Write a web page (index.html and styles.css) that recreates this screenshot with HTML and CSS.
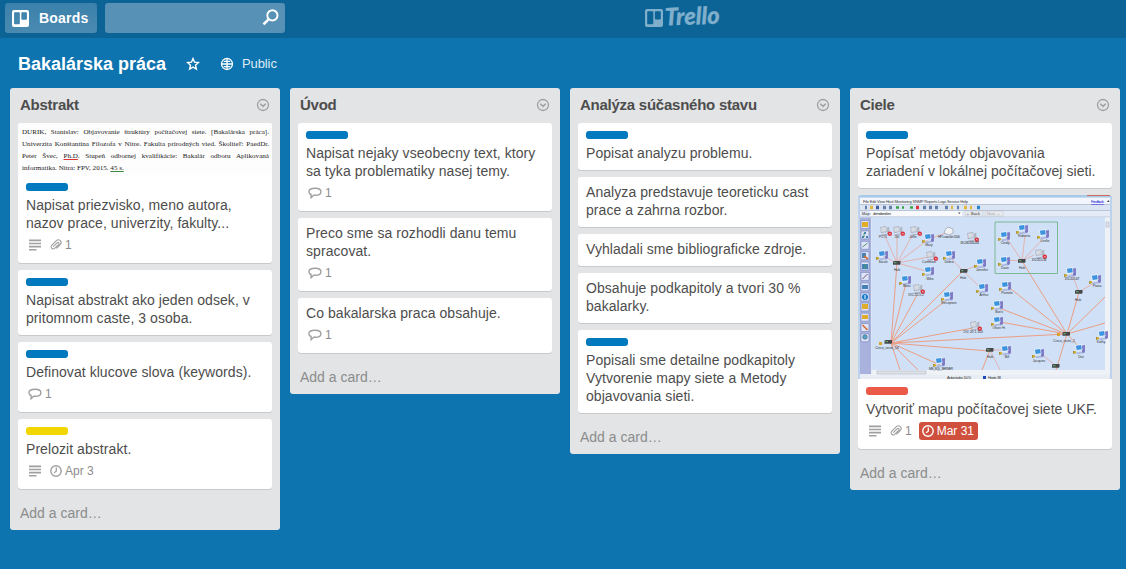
FILE: index.html
```html
<!DOCTYPE html>
<html lang="sk">
<head>
<meta charset="utf-8">
<title>Bakalárska práca | Trello</title>
<link rel="stylesheet" href="styles.css">
</head>
<body>
<svg class="defs" aria-hidden="true">
  <symbol id="i-menu" viewBox="0 0 14 14"><circle cx="7" cy="7" r="5.500" fill="none" stroke="currentColor" stroke-width="1.300"/><path d="M4.300 5.800 7 8.400l2.700-2.600" fill="none" stroke="currentColor" stroke-width="1.500"/></symbol>
  <symbol id="i-desc" viewBox="0 0 12 12"><path d="M0 1.400h12M0 4.500h12M0 7.600h12M0 10.700h7.500" stroke="currentColor" stroke-width="1.600"/></symbol>
  <symbol id="i-clip" viewBox="0 0 12 12"><path d="M3.200 7.600 7 3.800c1.300-1.200 2.800.2 1.600 1.500L4.900 9.100c-2.200 2.200-5.200-.7-3-2.900l4.200-4.300c3-2.800 6.700.7 4.100 3.600L6.400 9.400" fill="none" stroke="currentColor" stroke-width="1.100"/></symbol>
  <symbol id="i-talk" viewBox="0 0 14 12"><path d="M7.200 1.200c3.200 0 5.700 1.300 5.700 3.500S10.400 8.300 7.200 8.300c-.6 0-1.100 0-1.600-.1L3.100 10.700V7.500C1.700 6.900.9 5.800.9 4.700c0-2.200 3-3.500 6.300-3.500z" fill="none" stroke="currentColor" stroke-width="1.400"/></symbol>
  <symbol id="i-clock" viewBox="0 0 12 12"><circle cx="6" cy="6" r="5.200" fill="none" stroke="currentColor" stroke-width="1.400"/><path d="M6.300 2.600v3.600L4 7.800" fill="none" stroke="currentColor" stroke-width="1.300"/></symbol>
  <symbol id="i-trello" viewBox="0 0 18 18"><path fill="currentColor" fill-rule="evenodd" d="M2 0h14q2 0 2 2v14q0 2-2 2H2q-2 0-2-2V2q0-2 2-2zM3 2.300q-.8 0-.8.8v11.300q0 .8.8.8h4.500q.8 0 .8-.8V3.100q0-.8-.8-.8zM10.700 2.300q-.8 0-.8.8v6.500q0 .8.8.8H15q.8 0 .8-.8V3.100q0-.8-.8-.8z"/></symbol>
  <symbol id="pc" viewBox="0 0 12 10"><path d="M8 1.500 11 .8v6.700L8.500 8.600z" fill="#7d78c4"/><path d="M2 .8 8 0l.8 5.500-6 1z" fill="#e6effb"/><path d="M2.700 1.500 7.500.9l.6 3.900-4.700.7z" fill="#3c93de"/><path d="m2.500 8 5.500-1 1.500 1.200L4 9.300z" fill="#aab5dc"/><path d="M0 6.500h1.300v2.500H0z" fill="#8a7a42"/><circle cx="1.600" cy="7.600" r="1.200" fill="#cdaa20"/></symbol>
  <symbol id="off" viewBox="0 0 12 10"><path d="M1 .8 6.500 0l.8 5.500-5.500 1zM7.500 1l2-.5v6L7.500 8z" fill="#b0b4be"/><path d="M1.800 1.500 6 .9l.6 3.900-4.200.7z" fill="#d6dbe4"/><path d="m1.500 8 5-1 1.500 1-5 1.300z" fill="#abb0c0"/><circle cx="10" cy="7" r="2" fill="#da2431"/><path d="m9.200 6.200 1.600 1.600m0-1.600L9.200 7.800" stroke="#fff" stroke-width=".5"/></symbol>
  <symbol id="hub" viewBox="0 0 8 4"><path d="M0 .8 1 0h6.500v2.800L7 3.800H0z" fill="#44484a"/><path d="M1 1.700h2.500" stroke="#69b56c"/></symbol>
</svg>

<header class="topbar">
  <div class="boards-btn"><svg class="boards-icon"><use href="#i-trello"/></svg><span>Boards</span></div>
  <div class="search"><svg class="search-icon" viewBox="0 0 16 16"><circle cx="9.800" cy="6" r="4.800" fill="none" stroke="#fff" stroke-width="1.800"/><path d="m6.200 9.800-4.800 4.700" stroke="#fff" stroke-width="2.500"/></svg></div>
  <svg class="logo" viewBox="0 0 80 36"><use href="#i-trello" x="1" y="9" width="18" height="18"/><text x="21" y="25.500" textLength="55" lengthAdjust="spacingAndGlyphs" transform="rotate(-2 21 25)">Trello</text></svg>
</header>

<div class="board-head">
  <h1>Bakalárska práca</h1>
  <svg class="star" viewBox="0 0 14 14"><path d="m7 1.600 1.500 3.600 3.900.4-2.900 2.600.9 3.900L7 10.100l-3.400 2 .9-3.900-2.900-2.600 3.900-.4z" fill="none" stroke="currentColor" stroke-width="1.400"/></svg>
  <svg class="globe" viewBox="0 0 14 14"><circle cx="7" cy="7" r="5.500" fill="none" stroke="currentColor" stroke-width="1.300"/><path d="M7 1.500v11M1.500 7h11M3.800 4.400h6.400M3.800 9.600h6.400" fill="none" stroke="currentColor" stroke-width="1.300"/></svg>
  <span class="public">Public</span>
</div>

<main class="board">
  <section class="list">
    <div class="list-head"><h2>Abstrakt</h2><svg class="menu"><use href="#i-menu"/></svg></div>
    <article class="card">
      <div class="cover cite">
        <p>DURIK, Stanislav: Objavovanie štruktúry počítačovej siete. [Bakalárska práca].</p>
        <p>Univerzita Konštantína Filozofa v Nitre. Fakulta prírodných vied. Školiteľ: PaedDr.</p>
        <p>Peter Švec, <u class="err">Ph.D</u>. Stupeň odbornej kvalifikácie: Bakalár odboru Aplikovaná</p>
        <p class="last">informatika. Nitra: FPV, 2015. <u>45 s.</u></p>
      </div>
      <div class="label blue"></div>
      <p class="text">Napisat priezvisko, meno autora, nazov prace, univerzity, fakulty...</p>
      <div class="badges"><svg class="ic desc"><use href="#i-desc"/></svg><span class="badge"><svg class="ic"><use href="#i-clip"/></svg>1</span></div>
    </article>
    <article class="card">
      <div class="label blue"></div>
      <p class="text">Napisat abstrakt ako jeden odsek, v pritomnom caste, 3 osoba.</p>
    </article>
    <article class="card">
      <div class="label blue"></div>
      <p class="text">Definovat klucove slova (keywords).</p>
      <div class="badges"><span class="badge talk"><svg class="ic"><use href="#i-talk"/></svg>1</span></div>
    </article>
    <article class="card">
      <div class="label yellow"></div>
      <p class="text">Prelozit abstrakt.</p>
      <div class="badges"><svg class="ic desc"><use href="#i-desc"/></svg><span class="badge date"><svg class="ic"><use href="#i-clock"/></svg>Apr 3</span></div>
    </article>
    <div class="add">Add a card…</div>
  </section>

  <section class="list">
    <div class="list-head"><h2>Úvod</h2><svg class="menu"><use href="#i-menu"/></svg></div>
    <article class="card">
      <div class="label blue"></div>
      <p class="text">Napisat nejaky vseobecny text, ktory sa tyka problematiky nasej temy.</p>
      <div class="badges"><span class="badge talk"><svg class="ic"><use href="#i-talk"/></svg>1</span></div>
    </article>
    <article class="card">
      <p class="text">Preco sme sa rozhodli danu temu spracovat.</p>
      <div class="badges"><span class="badge talk"><svg class="ic"><use href="#i-talk"/></svg>1</span></div>
    </article>
    <article class="card">
      <p class="text">Co bakalarska praca obsahuje.</p>
      <div class="badges"><span class="badge talk"><svg class="ic"><use href="#i-talk"/></svg>1</span></div>
    </article>
    <div class="add">Add a card…</div>
  </section>

  <section class="list">
    <div class="list-head"><h2>Analýza súčasného stavu</h2><svg class="menu"><use href="#i-menu"/></svg></div>
    <article class="card">
      <div class="label blue"></div>
      <p class="text">Popisat analyzu problemu.</p>
    </article>
    <article class="card"><p class="text">Analyza predstavuje teoreticku cast prace a zahrna rozbor.</p></article>
    <article class="card"><p class="text">Vyhladali sme bibliograficke zdroje.</p></article>
    <article class="card"><p class="text">Obsahuje podkapitoly a tvori 30 % bakalarky.</p></article>
    <article class="card">
      <div class="label blue"></div>
      <p class="text">Popisali sme detailne podkapitoly Vytvorenie mapy siete a Metody objavovania sieti.</p>
    </article>
    <div class="add">Add a card…</div>
  </section>

  <section class="list">
    <div class="list-head"><h2>Ciele</h2><svg class="menu"><use href="#i-menu"/></svg></div>
    <article class="card">
      <div class="label blue"></div>
      <p class="text">Popísať metódy objavovania zariadení v lokálnej počítačovej sieti.</p>
    </article>
    <article class="card">
      <svg class="cover map" viewBox="858 195 254 184">
        <path fill="#e4ebf6" d="M858 195h254v184H858z"/>
        <path fill="#a9c9e8" d="M858 195h254v2.500H858z"/>
        <path fill="#d0685a" d="M1087 195h23v1h-23z"/>
        <path fill="#bcd3ee" d="M858 197h2v182h-2zM1110 197h2v182h-2z"/>
        <path fill="#f2f5fb" d="M860 198h250v6H860z"/>
        <path fill="#dbe4f3" d="M860 204h250v7H860z"/>
        <path fill="#f7f9fc" d="M870 211h92v5h-92z"/>
        <path fill="#e9eaee" stroke="#bdc4d2" stroke-width=".5" d="M965 211h18v5h-18zM985 211h18v5h-18z"/>
        <path stroke="#9aa6bd" stroke-width=".5" d="M860 204.500h250M860 210.500h250M860 217h250"/>
        <path fill="#cfe0f7" d="M871.500 217.500H1105V370H871.500z"/>
        <path fill="#a9b2dc" d="M860 217.500h11V374h-11z"/>
        <path fill="#eef1f6" d="M1105 217.500h5V375h-5zM871.500 370H1110v5H871.500z"/>
        <path fill="#dfe2e8" stroke="#a2aabb" stroke-width=".5" d="M877 371h49v3h-49zM1106 222h3v5h-3z"/>
        <path fill="#e8edf3" d="M860 375h250v4H860z"/>
        <text class="m-menu" x="863" y="203" textLength="105">File  Edit  View  Host  Monitoring  SNMP  Reports  Logs  Service  Help</text>
        <text class="m-link" x="1091" y="203" textLength="13">Feedback</text>
        <text class="m-menu" x="862" y="215" textLength="9">Map:</text><text class="m-menu" x="873" y="215" textLength="18">demobest.km</text>
        <text class="m-menu" x="966" y="215">← Back</text><text class="m-menu" x="987" y="215" opacity=".4">Next →</text>
        <path d="m958 212.500 2.500 0-1.200 1.500zM1107 202l1.500-2 1 2z" fill="#444"/>
        <g stroke-width="3.600">
          <path stroke="#6480a9" d="M865 207.500h2M883 207.500h3M889 207.500h3M923 207.500h3M929 207.500h3M935 207.500h3M945 207.500h3M957 207.500h2"/>
          <path stroke="#e1b83d" d="M870 207.500h3M951 207.500h2M964 207.500h3M970 207.500h2"/>
          <path stroke="#41599e" d="M876 207.500h3"/><path stroke="#38a647" stroke-width="2.500" d="M896 207.500h3M902 207.500h2M910 207.500h3"/>
          <path stroke="#de363b" d="M916 207.500h3"/><path stroke="#2583d0" d="M977 207.500h3"/>
        </g>
        <g fill="#dfe5f7" stroke="#7180ba" stroke-width=".6">
          <path d="M861 220.500h8v8h-8zM861 230.900h8v8h-8zM861 241.300h8v8h-8zM861 251.700h8v8h-8zM861 262h8v8h-8zM861 272.400h8v8h-8zM861 282.800h8v8h-8zM861 293h8v8h-8zM861 303h8v8h-8zM861 313.200h8v8h-8zM861 323.500h8v8h-8zM861 333.800h8v8h-8z"/>
        </g>
        <path fill="#dfad29" d="M862 222h6v5h-6zM862 304h6v5h-6zM862 315h6v4h-6z"/>
        <path fill="#4481b7" d="M864 232h2v2h-2zM862 236h2v2h-2zM866 236h2v2h-2zM862 253h4v5h-4zM862 264h6v5h-6zM862 285h6v4h-6z"/>
        <circle cx="865" cy="297" r="3" fill="#1378cb"/><path d="M865 295v4" stroke="#fff"/>
        <path stroke="#4c9771" d="m862.500 247 5-4M864 233v4M865 264v5"/><path stroke="#d36b35" stroke-width="1.600" d="m862.500 325 5 5M864 256l4 3"/>
        <path stroke="#758" d="m862.500 279 5-5"/><circle cx="865" cy="337" r="2.300" fill="#5aa2c4" stroke="#357" stroke-width=".5"/>
        <g fill="none" stroke="#e8a79a" stroke-width=".8">
          <path d="M897 263l-13-29M897 263v-29M897 263l16-29M897 263l32-24 17-6M897 263l-14-7M897 263l32-6M897 263l29 8"/>
          <path d="M949 256l14 15 17-7M963 271l19 18M1022 261l-16-24M1022 261l3-26M1022 261l22-23M1022 261l-17-1M1022 261l12-6M1079 292l-8-20M1079 292l15-9M990 350h15M990 350l10 20M1056 366l-17-14"/>
        </g>
        <g fill="none" stroke="#ec9b7d" stroke-width=".95">
          <path d="M897 263l-6 80M891 343l15-60M891 343l26-48M891 343l57-44M891 343l72-72M891 343l82-15M891 343l176-9M891 343l98 8M891 343l49 22M891 343l27 27M891 343l9 27"/>
          <path d="M1022 261l45 73M1067 334l-61-49M1067 334l-68-26M1067 334l-67-12M1067 334l12-42M1067 334l38-37M1067 334l38-11M1067 334l13 14M1067 334l-11 36M990 350l-8 20"/>
        </g>
        <path fill="none" stroke="#7bb894" d="M995 222h62.500v51.500H995z"/>
        <g>
          <use href="#off" x="879" y="226" width="13" height="11"/><use href="#off" x="892" y="226" width="13" height="11"/><use href="#off" x="909" y="226" width="13" height="11"/><use href="#off" x="966" y="232" width="13" height="11"/><use href="#off" x="925" y="251" width="13" height="11"/><use href="#off" x="912" y="284" width="13" height="11"/><use href="#off" x="969" y="321" width="13" height="11"/><use href="#off" x="1034" y="249" width="13" height="11"/>
          <path d="m945 230 3-3 5 2v4l-4 2-5-2z" fill="#f2f3f6" stroke="#8890a0" stroke-width=".6"/>
          <use href="#pc" x="922" y="233" width="13" height="11"/><use href="#pc" x="876" y="250" width="13" height="11"/><use href="#pc" x="922" y="266" width="13" height="11"/><use href="#pc" x="943" y="250" width="13" height="11"/><use href="#pc" x="974" y="258" width="13" height="11"/><use href="#pc" x="899" y="275" width="13" height="11"/><use href="#pc" x="941" y="291" width="13" height="11"/><use href="#pc" x="976" y="283" width="13" height="11"/><use href="#pc" x="933" y="357" width="13" height="11"/>
          <use href="#pc" x="998" y="231" width="13" height="11"/><use href="#pc" x="1016" y="224" width="13" height="11"/><use href="#pc" x="1037" y="229" width="13" height="11"/><use href="#pc" x="998" y="256" width="13" height="11"/><use href="#pc" x="1064" y="267" width="13" height="11"/><use href="#pc" x="1089" y="274" width="13" height="11"/><use href="#pc" x="999" y="281" width="13" height="11"/><use href="#pc" x="991" y="300" width="13" height="11"/><use href="#pc" x="991" y="316" width="13" height="11"/><use href="#pc" x="999" y="345" width="13" height="11"/><use href="#pc" x="1032" y="348" width="13" height="11"/><use href="#pc" x="1073" y="344" width="13" height="11"/><use href="#pc" x="1096" y="330" width="13" height="11"/>
          <use href="#hub" x="893" y="261" width="8" height="4"/><use href="#hub" x="960" y="269" width="8" height="4"/><use href="#hub" x="1018" y="259" width="8" height="4"/><use href="#hub" x="1075" y="290" width="8" height="4"/><use href="#hub" x="986" y="348" width="8" height="4"/><use href="#hub" x="1052" y="364" width="8" height="4"/><use href="#hub" x="1062" y="332" width="9" height="4"/><use href="#hub" x="884" y="340" width="9" height="4"/>
          <path fill="#d7a529" d="M879 342h3v3h-3zM1057 333h3v3h-3z"/>
        </g>
        <g class="m-label">
          <text x="883" y="238">PC#1</text><text x="897" y="238">Jel</text><text x="913" y="238">John</text><text x="949" y="238" textLength="22">HP LaserJet 1100</text><text x="970" y="244" textLength="19">69.230.163.241</text><text x="929" y="246">Mary</text><text x="883" y="263">Sarah</text><text x="929" y="263">Common</text><text x="949" y="263">Debra</text><text x="982" y="271">Jennifer</text><text x="897" y="271">Hub</text><text x="930" y="280">Mike</text><text x="963" y="279">Hub</text><text x="907" y="287">Boss</text><text x="916" y="296">192.20.5.2</text><text x="949" y="304">Reception</text><text x="984" y="296">Arthur</text><text x="973" y="333">192.20.1.104</text><text x="887" y="349">Cisco_route_56</text><text x="941" y="370" textLength="24">MS_SQL_SERVER</text>
          <text x="1005" y="244">Cindy</text><text x="1024" y="237">Roberto</text><text x="1045" y="242">Leslie</text><text x="1005" y="269">Dave</text><text x="1022" y="269">Hub</text><text x="1039" y="261" textLength="15">192.20.5.34</text><text x="1072" y="280" textLength="15">192.20.5.67</text><text x="1097" y="287">Piana</text><text x="1078" y="301">Hub</text><text x="1007" y="294">Pamela</text><text x="999" y="313">Boris</text><text x="999" y="329">Oliver H.</text><text x="1064" y="342">Cisco_route_2</text><text x="990" y="358">Hub</text><text x="1007" y="358">Bill</text><text x="1039" y="362">Jacques</text><text x="1081" y="358">Dixi</text><text x="1101" y="343">Kathy</text>
        </g>
        <text class="m-menu" x="947" y="378.500" textLength="24">Active tasks: 10 / 0</text><text class="m-menu" x="988" y="378.500" textLength="13">Hosts: 38</text><path fill="#2148b4" d="M983 376h3v3h-3z"/>
      </svg>
      <div class="label red"></div>
      <p class="text">Vytvoriť mapu počítačovej siete UKF.</p>
      <div class="badges"><svg class="ic desc"><use href="#i-desc"/></svg><span class="badge"><svg class="ic"><use href="#i-clip"/></svg>1</span><span class="badge date due"><svg class="ic"><use href="#i-clock"/></svg>Mar 31</span></div>
    </article>
    <div class="add">Add a card…</div>
  </section>
</main>
</body>
</html>
```
FILE: styles.css
```css
* { box-sizing: border-box; }
body { margin: 0; height: 569px; overflow: hidden; background: #0e74af; font-family: "Liberation Sans", Arial, sans-serif; font-size: 14px; line-height: 18px; color: #4d4d4d; }
h1, h2, p { margin: 0; }
svg { display: block; flex: none; }
.defs { display: none; }

.topbar { display: flex; align-items: center; gap: 8px; height: 38px; padding: 0 5px 2px; background: #0c6396; }
.boards-btn { display: flex; align-items: center; gap: 10px; width: 92px; height: 30px; padding-left: 7px; border-radius: 3px; background: linear-gradient(#3b81ab, #4a8ab1); color: #fff; font-weight: bold; letter-spacing: .2px; }
.boards-icon { width: 17px; height: 17px; }
.search { display: flex; justify-content: flex-end; width: 180px; height: 30px; padding: 6px 6px 0 0; border-radius: 3px; background: #5791b6; }
.search-icon { width: 17px; height: 17px; }
.logo { width: 80px; height: 36px; margin-left: 351px; overflow: visible; color: #80afcc; }
.logo text { font: italic 900 24px Lato, sans-serif; fill: currentColor; stroke: currentColor; stroke-width: .3px; }

.board-head { display: flex; align-items: center; height: 50px; padding: 1px 0 0 18px; color: #fff; }
h1 { width: 168px; font-size: 18px; line-height: 24px; white-space: nowrap; }
.star { width: 14px; height: 14px; }
.globe { width: 14px; height: 14px; margin-left: 20px; }
.public { margin-left: 8px; font-size: 13px; letter-spacing: -.1px; color: #dcebf5; }

.board { display: flex; align-items: flex-start; gap: 10px; padding-left: 10px; }
.list { flex: none; width: 270px; padding: 0 8px; border-radius: 3px; background: #e2e4e6; }
.list-head { display: flex; align-items: center; justify-content: space-between; height: 35px; padding: 0 2px 2px; }
h2 { font-size: 15px; line-height: 18px; letter-spacing: -.25px; white-space: nowrap; }
.menu { width: 14px; height: 14px; color: #a0a0a0; }
.card { margin-bottom: 7px; padding: 6px 8px 8px; border-radius: 3px; background: #fff; box-shadow: 0 1px 0 #c8cacc; overflow: hidden; }
.text { letter-spacing: .06px; }
.label { width: 42px; height: 8px; margin: 2px 0 5px; border-radius: 3px; }
.blue { background: #0079bf; }
.yellow { background: #f2d600; }
.red { background: #eb5a46; }
.badges { display: flex; align-items: center; height: 18px; margin: 4px 0 1px; padding-left: 3px; font-size: 12px; color: #8c8c8c; }
.ic { width: 12px; height: 12px; color: #a0a0a0; }
.desc { margin-right: 9px; }
.badge { display: flex; align-items: center; gap: 3px; }
.talk .ic { width: 14px; height: 12px; margin-left: -1px; }
.date { gap: 3px; }
.due { height: 18px; margin-left: 7px; padding: 0 4px 0 3px; border-radius: 3px; background: #cf513d; color: #fff; }
.due .ic { color: #fff; }
.add { padding: 8px 2px 8px; color: #8c8c8c; }

.cover { margin: -6px -8px 8px; }
.map { width: 254px; height: 184px; }
.cite { height: 52px; padding: 3px 3px 0 4px; background: #fdfdfd; font: 7.1px/12px "Liberation Serif", serif; color: #222; }
.cite p { white-space: nowrap; text-align-last: justify; }
.cite .last { text-align-last: left; }
.cite u { text-decoration-color: #3a8a48; }
.cite .err { text-decoration-color: #d33; }
.m-menu { font: 4px "Liberation Sans", sans-serif; fill: #333; }
.m-link { font: 4px "Liberation Sans", sans-serif; fill: #22d; text-decoration: underline; }
.m-label { font: 3.4px "Liberation Sans", sans-serif; fill: #333; text-anchor: middle; }
```
